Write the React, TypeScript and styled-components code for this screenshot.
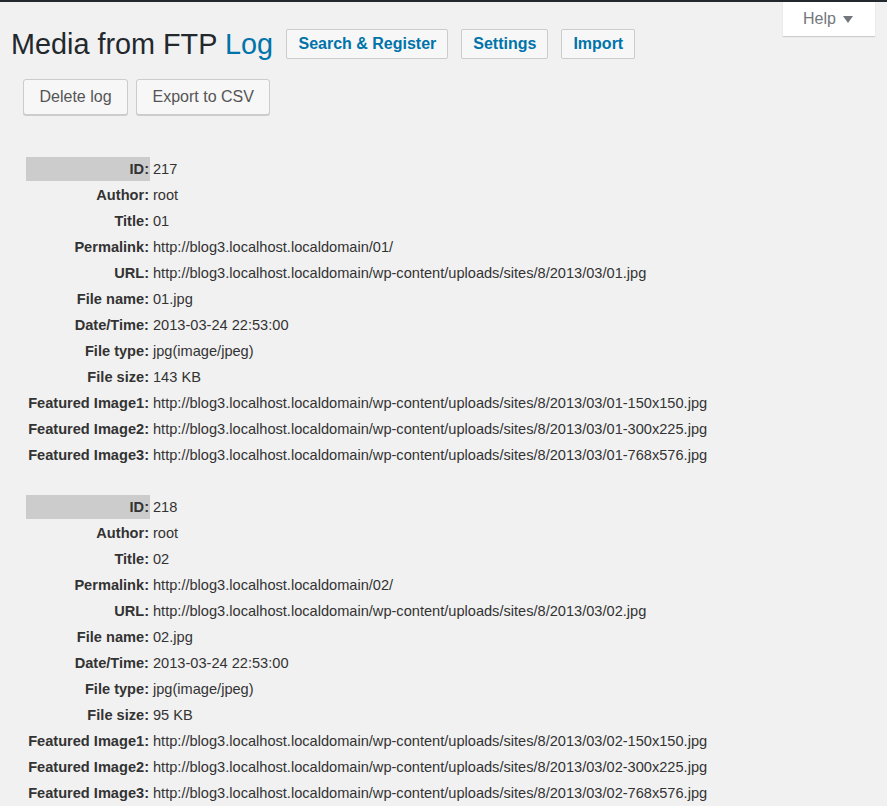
import React from "react";
import styled, { createGlobalStyle } from "styled-components";

const GlobalStyle = createGlobalStyle`
  html, body {
    margin: 0;
    padding: 0;
    background: #f1f1f1;
  }
  body {
    font-family: "Liberation Sans", Arial, sans-serif;
    color: #444;
    font-size: 14px;
  }
`;

const Page = styled.div`
  position: relative;
  min-height: 806px;
  border-top: 2px solid #23282d;
  box-sizing: border-box;
`;

const HelpTab = styled.button`
  position: absolute;
  top: 0;
  right: 12px;
  width: 92px;
  height: 34px;
  border: none;
  background: #fff;
  box-shadow: 0 1px 1px rgba(0, 0, 0, 0.15);
  font-family: "Liberation Sans", Arial, sans-serif;
  font-size: 16px;
  color: #72777c;
  display: flex;
  align-items: center;
  justify-content: center;
  gap: 7px;
  padding: 0 2px 0 0;
`;

const Caret = styled.span`
  width: 0;
  height: 0;
  border-left: 5.5px solid transparent;
  border-right: 5.5px solid transparent;
  border-top: 7px solid #72777c;
  margin-top: 1px;
`;

const Header = styled.div`
  display: flex;
  align-items: center;
  gap: 13px;
  padding: 27px 0 0 11px;
`;

const Title = styled.h1`
  margin: 0 0.5px 0 0;
  font-size: 28.8px;
  line-height: 30px;
  font-weight: 400;
  color: #23282d;
`;

const TitleLink = styled.span`
  color: #0073aa;
`;

const NavButton = styled.a`
  display: inline-flex;
  align-items: center;
  height: 28px;
  padding: 0 11px;
  border: 1px solid #ccc;
  border-radius: 2px;
  background: #f7f7f7;
  color: #0073aa;
  font-weight: 700;
  font-size: 16px;
  text-decoration: none;
`;

const Actions = styled.div`
  display: flex;
  gap: 8px;
  padding: 20px 0 0 23px;
`;

const ActionButton = styled.button`
  height: 36px;
  padding: 0 15.5px 1px;
  border: 1px solid #ccc;
  border-radius: 3px;
  background: #f7f7f7;
  box-shadow: 0 1px 0 #ccc;
  color: #555;
  font-family: "Liberation Sans", Arial, sans-serif;
  font-size: 16px;
`;

const Records = styled.div`
  display: flex;
  flex-direction: column;
  gap: 24px;
  padding: 40px 0 0 24px;
`;

const Table = styled.table`
  border-spacing: 2px;
  border-collapse: separate;
  font-size: 14.6px;
  line-height: 22px;
`;

const Label = styled.th<{ $head?: boolean }>`
  width: 122px;
  padding: 1px;
  text-align: right;
  font-weight: 700;
  white-space: nowrap;
  color: #333;
  background: ${(p) => (p.$head ? "#ccc" : "transparent")};
`;

const Value = styled.td`
  padding: 1px;
  text-align: left;
  white-space: nowrap;
  color: #333;
`;

type Rec = { id: string; title: string; size: string };

const records: Rec[] = [
  { id: "217", title: "01", size: "143 KB" },
  { id: "218", title: "02", size: "95 KB" },
];

const base = "http://blog3.localhost.localdomain";
const up = `${base}/wp-content/uploads/sites/8/2013/03/`;

function Record({ r }: { r: Rec }) {
  const rows: [string, string][] = [
    ["Author:", "root"],
    ["Title:", r.title],
    ["Permalink:", `${base}/${r.title}/`],
    ["URL:", `${up}${r.title}.jpg`],
    ["File name:", `${r.title}.jpg`],
    ["Date/Time:", "2013-03-24 22:53:00"],
    ["File type:", "jpg(image/jpeg)"],
    ["File size:", r.size],
    ["Featured Image1:", `${up}${r.title}-150x150.jpg`],
    ["Featured Image2:", `${up}${r.title}-300x225.jpg`],
    ["Featured Image3:", `${up}${r.title}-768x576.jpg`],
  ];
  return (
    <Table>
      <tbody>
        <tr>
          <Label $head>ID:</Label>
          <Value>{r.id}</Value>
        </tr>
        {rows.map(([k, v]) => (
          <tr key={k}>
            <Label>{k}</Label>
            <Value>{v}</Value>
          </tr>
        ))}
      </tbody>
    </Table>
  );
}

export default function App() {
  return (
    <Page>
      <GlobalStyle />
      <HelpTab>
        Help <Caret />
      </HelpTab>
      <Header>
        <Title>
          Media from FTP <TitleLink>Log</TitleLink>
        </Title>
        <NavButton href="#">Search &amp; Register</NavButton>
        <NavButton href="#">Settings</NavButton>
        <NavButton href="#">Import</NavButton>
      </Header>
      <Actions>
        <ActionButton>Delete log</ActionButton>
        <ActionButton>Export to CSV</ActionButton>
      </Actions>
      <Records>
        {records.map((r) => (
          <Record key={r.id} r={r} />
        ))}
      </Records>
    </Page>
  );
}
